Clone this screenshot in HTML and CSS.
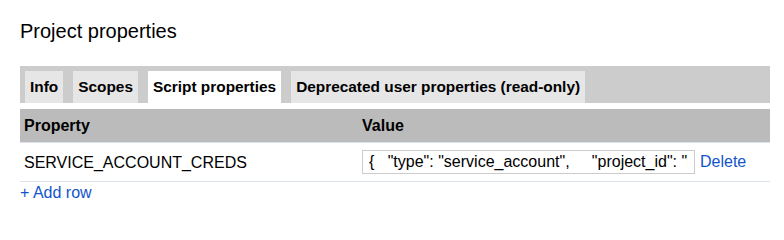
FILE: index.html
```html
<!DOCTYPE html>
<html>
<head>
<meta charset="utf-8">
<link rel="stylesheet" href="styles.css">
</head>
<body>
<div class="page">
  <h1 class="title">Project properties</h1>
  <div class="tabstrip">
    <div class="tab">Info</div>
    <div class="tab">Scopes</div>
    <div class="tab active">Script properties</div>
    <div class="tab">Deprecated user properties (read-only)</div>
  </div>
  <div class="table">
    <div class="row head">
      <div class="cell prop">Property</div>
      <div class="cell val">Value</div>
    </div>
    <div class="row body">
      <div class="cell prop">SERVICE_ACCOUNT_CREDS</div>
      <div class="cell val">
        <input class="valinput" type="text" value='{   "type": "service_account",     "project_id": "my-project",     "private_key_id": "abc"}'>
        <a class="link" href="#">Delete</a>
      </div>
    </div>
  </div>
  <a class="link addrow" href="#">+ Add row</a>
</div>
</body>
</html>
```

FILE: styles.css
```css
html, body {
  margin: 0;
  padding: 0;
  background: #fff;
}
body {
  font-family: "Liberation Sans", Arial, sans-serif;
  font-size: 16px;
  color: #000;
}
.page {
  padding: 19px 14px 0 20px;
}
.title {
  margin: 0;
  font-size: 20px;
  font-weight: normal;
  line-height: 24px;
  height: 47px;
}
.tabstrip {
  display: flex;
  gap: 10px;
  background: #cccccc;
  padding: 5px 5px 0 5px;
  height: 32px;
}
.tab {
  background: #e6e6e6;
  font-weight: bold;
  font-size: 15.4px;
  line-height: 32px;
  padding: 0 5px;
}
.tab.active {
  background: #fff;
}
.table {
  margin-top: 6px;
}
.row {
  display: flex;
}
.row.head {
  background: #bbbbbb;
  font-weight: bold;
  height: 33px;
  align-items: center;
  border-bottom: 1px solid #dde3ec;
}
.row.head .cell {
  padding-top: 1px;
}
.row.body {
  height: 38px;
  align-items: center;
  border-bottom: 1px solid #dde3ec;
}
.row.body .cell.prop {
  padding-top: 1px;
}
.cell.prop {
  width: 338px;
  padding-left: 4px;
}
.cell.val {
  flex: 1;
  display: flex;
  align-items: center;
  gap: 5px;
}
.valinput {
  box-sizing: border-box;
  width: 333px;
  height: 24px;
  border: 1px solid #cccccc;
  padding: 0 6px 0 6px;
  font-family: "Liberation Sans", Arial, sans-serif;
  font-size: 16px;
  color: #000;
  outline: none;
}
.link {
  color: #1155cc;
  text-decoration: none;
}
.addrow {
  display: inline-block;
  margin-top: 2px;
  line-height: 18px;
}
```
